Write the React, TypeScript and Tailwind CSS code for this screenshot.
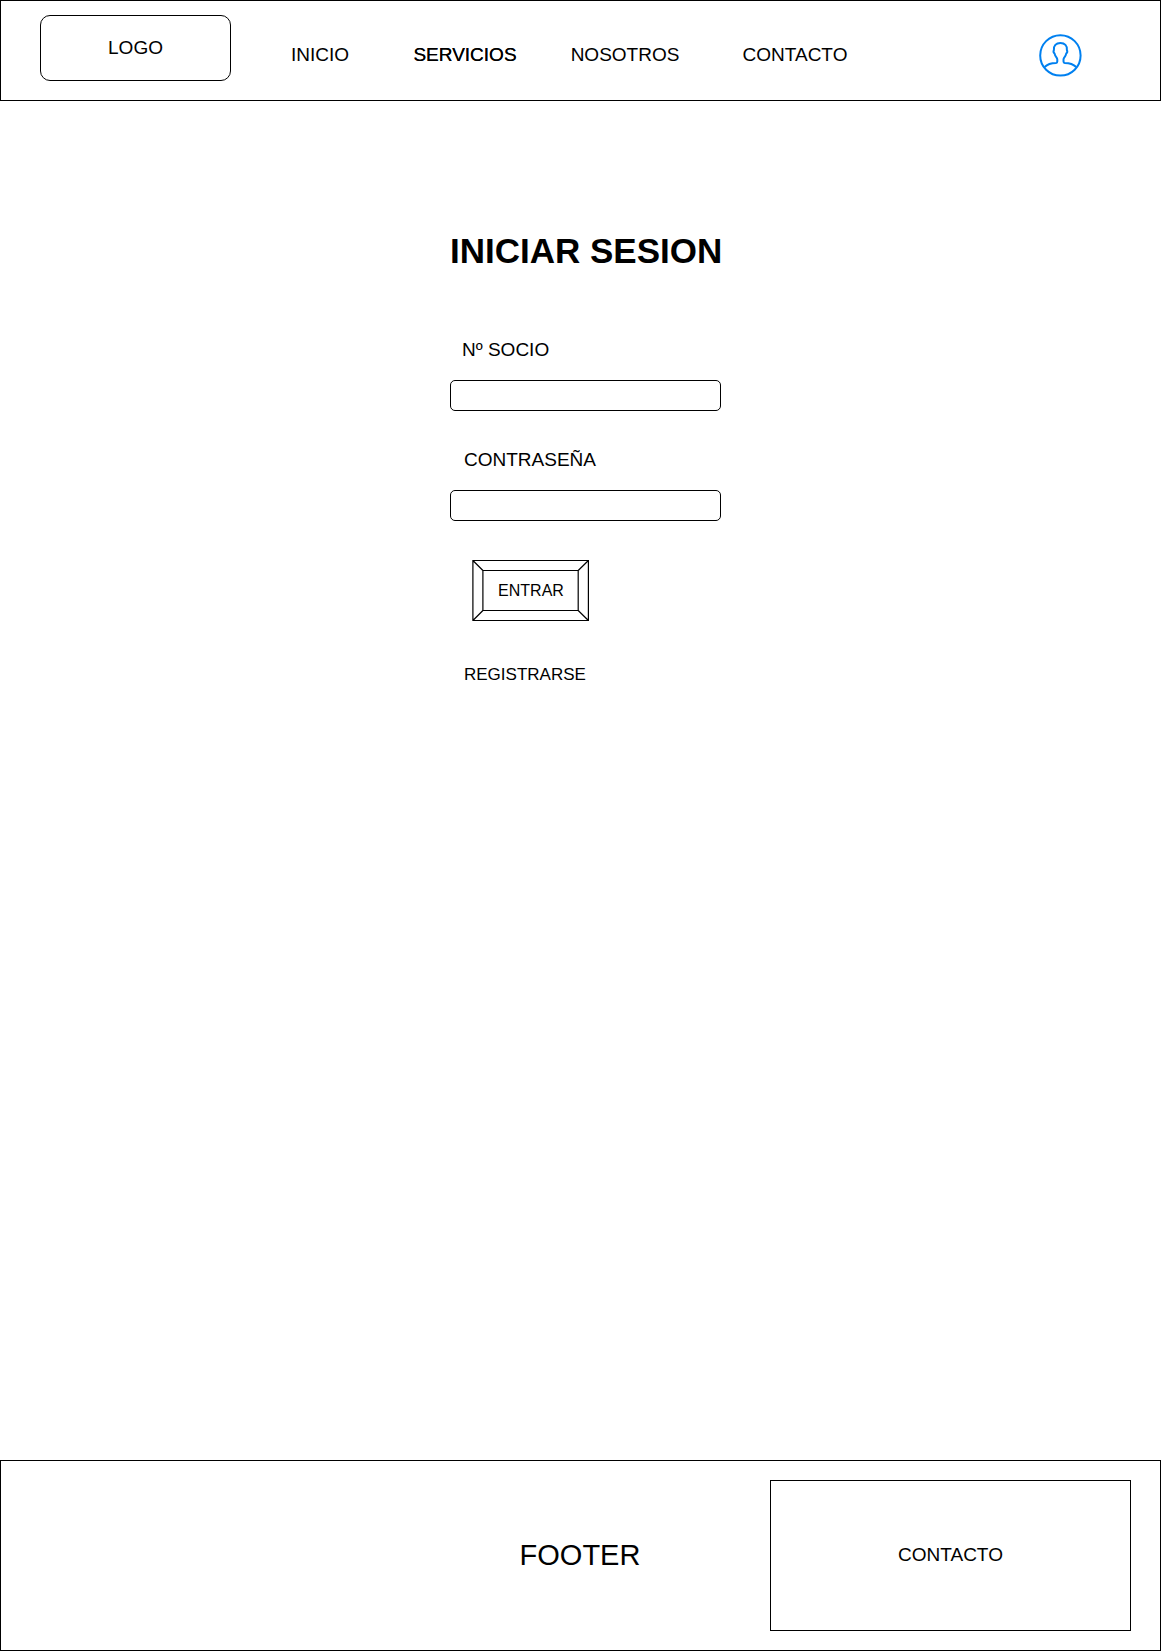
const navItems = [
  { label: 'INICIO', className: 'w-[60px]' },
  { label: 'SERVICIOS', className: 'ml-[60px] w-[110px] [text-shadow:0_0_0_#000]' },
  { label: 'NOSOTROS', className: 'ml-[50px] w-[110px]' },
  { label: 'CONTACTO', className: 'ml-[60px] w-[110px]' },
];

function UserIcon() {
  return (
    <svg className="ml-[189px] mt-[33px] size-[43px]" viewBox="1039 34 43 43" fill="none" stroke="#0080F0" strokeWidth="2" strokeLinejoin="round">
      <circle cx="1060.4" cy="55.4" r="20.2" />
      <path d="M1044.6 67C1047.5 64 1051 62.9 1056 62.9Q1057.3 62.8 1057.3 61.5V59.5C1057.3 57.2 1055.2 57 1054.6 53.6C1053.6 52.8 1053.4 51 1053.9 50C1053.5 45.6 1056 43 1060.4 43C1064.8 43 1067.3 45.6 1066.9 50C1067.4 51 1067.2 52.8 1066.2 53.6C1065.6 57 1063.5 57.2 1063.5 59.5V61.5Q1063.5 62.8 1064.8 62.9C1069.8 62.9 1073.3 64 1076.2 67" />
    </svg>
  );
}

export default function App() {
  return (
    <div className="flex h-[1651px] w-[1161px] flex-col bg-white font-['Liberation_Sans',Arial,sans-serif] text-[19px] leading-[21px] text-black">
      <header className="flex h-[101px] border border-black">
        <div className="ml-[39px] mt-[14px] flex h-[66px] w-[191px] shrink-0 items-center justify-center rounded-[10px] border border-black pb-px">
          LOGO
        </div>
        <nav className="ml-[59px] mt-[43px] flex h-[21px] shrink-0">
          {navItems.map((item) => (
            <a key={item.label} className={`text-center ${item.className}`}>
              {item.label}
            </a>
          ))}
        </nav>
        <UserIcon />
      </header>

      <main className="ml-[450px] flex w-[271px] grow flex-col items-start">
        <h1 className="mt-[130px] h-[40px] w-full whitespace-nowrap text-center text-[35px] font-bold leading-[40px]">INICIAR SESION</h1>
        <label className="ml-3 mt-[68px]" htmlFor="socio">Nº SOCIO</label>
        <input id="socio" className="mt-5 h-[31px] w-full rounded-[5px] border border-black px-2 outline-none" />
        <label className="ml-[14px] mt-[38px]" htmlFor="clave">CONTRASEÑA</label>
        <input id="clave" type="password" className="mt-5 h-[31px] w-full rounded-[5px] border border-black px-2 outline-none" />
        <button className="relative ml-[22px] mt-[39px] h-[61px] w-[118px] text-[16px] leading-[18px]">
          <svg className="absolute inset-0" width="118" height="61" fill="none" stroke="#000" strokeWidth="1.2">
            <path d="M.9 .5H116.4V60.5H.9ZM10.9 10.5H106.2V50.5H10.9ZM.9 .5L10.9 10.5M116.4 .5L106.2 10.5M116.4 60.5L106.2 50.5M.9 60.5L10.9 50.5" />
          </svg>
          <span className="relative">ENTRAR</span>
        </button>
        <a className="ml-[14px] mt-[44px] text-[17px] leading-[19px]">REGISTRARSE</a>
      </main>

      <footer className="flex h-[191px] shrink-0 border border-black">
        <div className="ml-[499px] flex w-[160px] items-center justify-center text-[29px] leading-[33px]">FOOTER</div>
        <div className="ml-[110px] mt-[19px] flex h-[151px] w-[361px] items-center justify-center border border-black pb-[2px]">CONTACTO</div>
      </footer>
    </div>
  );
}
